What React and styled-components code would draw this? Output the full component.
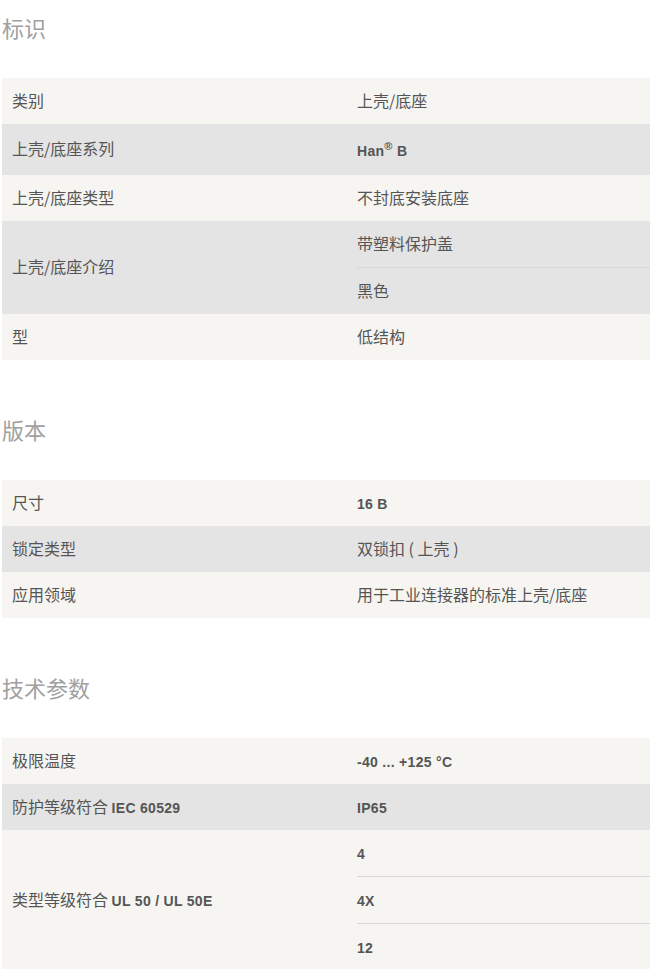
import React from "react";
import styled, { createGlobalStyle } from "styled-components";

const Global = createGlobalStyle`
  html, body { margin: 0; padding: 0; background: #ffffff; }
  body {
    font-family: "Liberation Sans", Arial, "Noto Sans CJK SC", sans-serif;
    color: #555555;
  }
`;

const Page = styled.div`
  width: 648px;
  padding-left: 2px;
`;

const Section = styled.section`
  padding-top: 12px;
  margin-bottom: 42px;
`;

const Heading = styled.h2`
  margin: 0 0 36px;
  font-size: 22px;
  line-height: 30px;
  font-weight: normal;
  color: #a0a0a0;
  font-family: "Noto Sans CJK SC", sans-serif;
`;

const Table = styled.div`
  display: flex;
  flex-direction: column;
`;

const Row = styled.div`
  display: grid;
  grid-template-columns: 355px 1fr;
  background: ${(p) => (p.$alt ? "#e4e4e4" : "#f6f5f2")};
`;

const Label = styled.div`
  display: flex;
  align-items: center;
  padding: 0 0 2px 10px;
  font-size: 16px;
  line-height: 20px;
  font-family: "Noto Sans CJK SC", sans-serif;
  color: #555555;
  white-space: pre;
`;

const Values = styled.div`
  display: flex;
  flex-direction: column;
`;

const Value = styled.div`
  padding: 12px 0 14px;
  min-height: 20px;
  font-size: 16px;
  line-height: 20px;
  font-family: "Noto Sans CJK SC", sans-serif;
  color: #555555;
  & + & {
    border-top: 1px solid #d8d8d8;
  }
`;

const Text = styled.span`
  display: inline-block;
  height: 20px;
  line-height: 20px;
`;

const Latin = styled.span`
  font-family: "Liberation Sans", Arial, sans-serif;
  font-weight: bold;
  font-size: 14px;
  color: #555555;
  letter-spacing: 0.3px;
`;

const Sup = styled.sup`
  font-size: 11px;
  vertical-align: super;
  line-height: 20px;
`;

const L = ({ children }) => <Latin>{children}</Latin>;

const sections = [
  {
    title: "标识",
    rows: [
      { label: "类别", values: ["上壳/底座"] },
      {
        label: "上壳/底座系列",
        values: [
          <L key="h">
            Han<Sup>®</Sup> B
          </L>,
        ],
        tall: true,
      },
      { label: "上壳/底座类型", values: ["不封底安装底座"] },
      { label: "上壳/底座介绍", values: ["带塑料保护盖", "黑色"] },
      { label: "型", values: ["低结构"] },
    ],
  },
  {
    title: "版本",
    rows: [
      { label: "尺寸", values: [<L key="s">16 B</L>] },
      { label: "锁定类型", values: ["双锁扣 ( 上壳 )"] },
      { label: "应用领域", values: ["用于工业连接器的标准上壳/底座"] },
    ],
  },
  {
    title: "技术参数",
    rows: [
      { label: "极限温度", values: [<L key="t">-40 ... +125 °C</L>] },
      {
        label: (
          <>
            {"防护等级符合 "}
            <L>IEC 60529</L>
          </>
        ),
        values: [<L key="ip">IP65</L>],
      },
      {
        label: (
          <>
            {"类型等级符合 "}
            <L>UL 50 / UL 50E</L>
          </>
        ),
        values: [<L key="a">4</L>, <L key="b">4X</L>, <L key="c">12</L>],
      },
    ],
  },
];

export default function App() {
  return (
    <>
      <Global />
      <Page>
        {sections.map((s) => (
          <Section key={s.title}>
            <Heading>{s.title}</Heading>
            <Table>
              {s.rows.map((r, i) => (
                <Row key={i} $alt={i % 2 === 1}>
                  <Label>
                    <Text>{r.label}</Text>
                  </Label>
                  <Values>
                    {r.values.map((v, j) =>
                      r.tall ? (
                        <Value key={j}>{v}</Value>
                      ) : (
                        <Value key={j}>
                          <Text>{v}</Text>
                        </Value>
                      )
                    )}
                  </Values>
                </Row>
              ))}
            </Table>
          </Section>
        ))}
      </Page>
    </>
  );
}
